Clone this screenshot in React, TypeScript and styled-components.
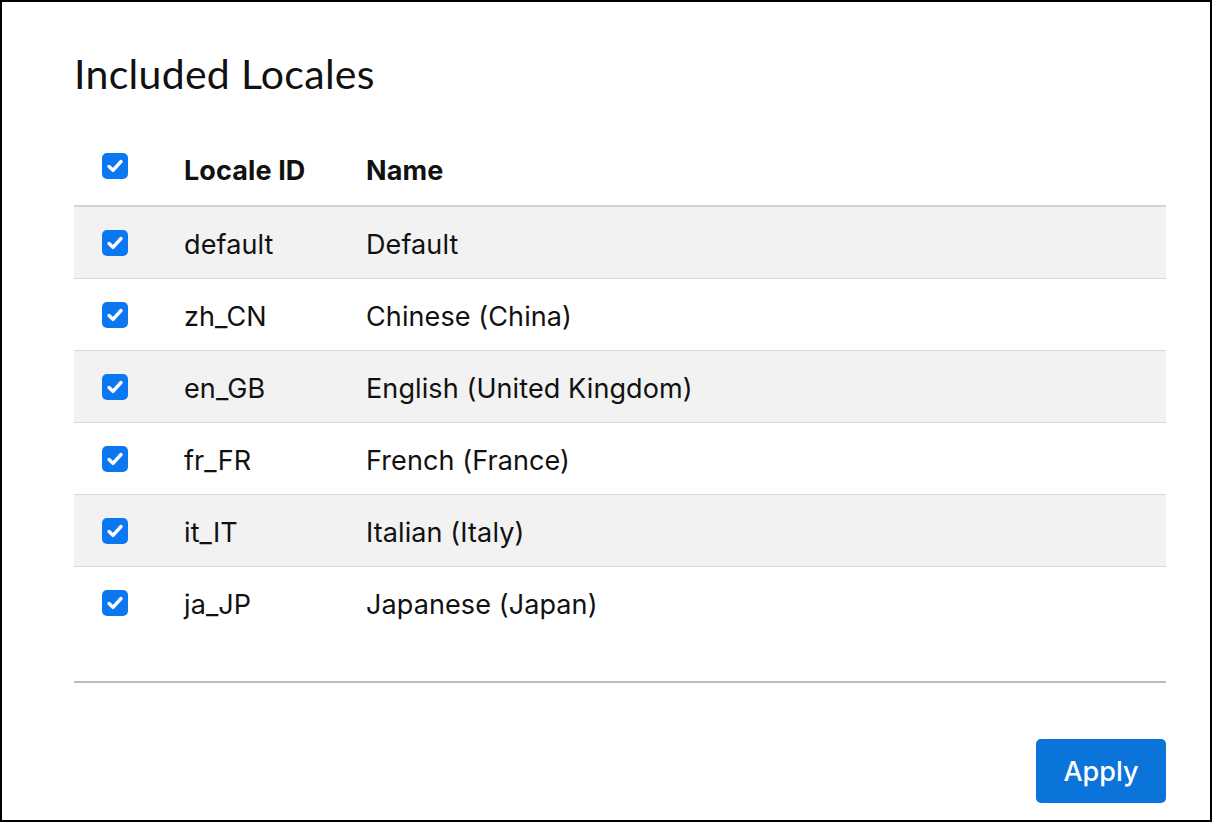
import React from 'react';
import styled, { createGlobalStyle } from 'styled-components';

const GlobalStyle = createGlobalStyle`
  html, body {
    margin: 0;
    padding: 0;
    background: #ffffff;
  }
  body {
    font-family: Inter, 'Liberation Sans', sans-serif;
    color: #111111;
  }
`;

const Frame = styled.div`
  width: 1212px;
  height: 822px;
  box-sizing: border-box;
  border: 2px solid #000000;
  padding: 0 44px 0 72px;
  display: flex;
  flex-direction: column;
`;

const Title = styled.h1`
  margin: 44px 0 0;
  font-family: Lato, 'Open Sans', sans-serif;
  font-weight: 400;
  font-size: 41px;
  line-height: 56px;
  letter-spacing: 0.3px;
  color: #111111;
`;

const Table = styled.div`
  margin-top: 33px;
  display: flex;
  flex-direction: column;
`;

const Row = styled.div<{ header?: boolean; striped?: boolean; last?: boolean }>`
  display: grid;
  grid-template-columns: 110px 182px 1fr;
  align-items: center;
  height: ${({ header }) => (header ? '70px' : '71px')};
  background: ${({ striped }) => (striped ? '#f2f2f2' : 'transparent')};
  border-bottom: ${({ header, last }) =>
    header ? '2px solid #d4d4d4' : last ? '1px solid transparent' : '1px solid #d8d8d8'};
  font-size: 27px;
  letter-spacing: 0.1px;
  font-weight: ${({ header }) => (header ? 700 : 400)};
`;

const CheckCell = styled.div<{ header?: boolean }>`
  padding-left: 28px;
  padding-bottom: ${({ header }) => (header ? '8px' : '0')};
  display: flex;
  align-items: center;
`;

const Cell = styled.div<{ header?: boolean }>`
  padding-top: ${({ header }) => (header ? '0' : '4px')};
  white-space: nowrap;
`;

const Box = styled.span`
  width: 26px;
  height: 26px;
  border-radius: 5px;
  background: #0b78f2;
  display: inline-flex;
  align-items: center;
  justify-content: center;
`;

const Divider = styled.div`
  margin-top: 42px;
  height: 2px;
  background: #bcbcbc;
`;

const Footer = styled.div`
  display: flex;
  justify-content: flex-end;
  margin-top: 56px;
`;

const Button = styled.button`
  width: 130px;
  height: 64px;
  border: none;
  border-radius: 5px;
  background: #0a74da;
  color: #ffffff;
  font-family: Inter, 'Liberation Sans', sans-serif;
  font-size: 27px;
  font-weight: 500;
  cursor: pointer;
`;

const Check = () => (
  <Box>
    <svg width='18' height='18' viewBox='0 0 18 18'>
      <path d='M3 9.5 L7 13.3 L15 4.5' fill='none' stroke='#ffffff' strokeWidth='3.4' strokeLinecap='round' strokeLinejoin='round' />
    </svg>
  </Box>
);

const locales = [
  { id: 'default', name: 'Default' },
  { id: 'zh_CN', name: 'Chinese (China)' },
  { id: 'en_GB', name: 'English (United Kingdom)' },
  { id: 'fr_FR', name: 'French (France)' },
  { id: 'it_IT', name: 'Italian (Italy)' },
  { id: 'ja_JP', name: 'Japanese (Japan)' },
];

function App() {
  return (
    <>
      <GlobalStyle />
      <Frame>
        <Title>Included Locales</Title>
        <Table>
          <Row header>
            <CheckCell header>
              <Check />
            </CheckCell>
            <Cell header>Locale ID</Cell>
            <Cell header>Name</Cell>
          </Row>
          {locales.map((l, i) => (
            <Row key={l.id} striped={i % 2 === 0} last={i === locales.length - 1}>
              <CheckCell>
                <Check />
              </CheckCell>
              <Cell>{l.id}</Cell>
              <Cell>{l.name}</Cell>
            </Row>
          ))}
        </Table>
        <Divider />
        <Footer>
          <Button>Apply</Button>
        </Footer>
      </Frame>
    </>
  );
}

export default App;
